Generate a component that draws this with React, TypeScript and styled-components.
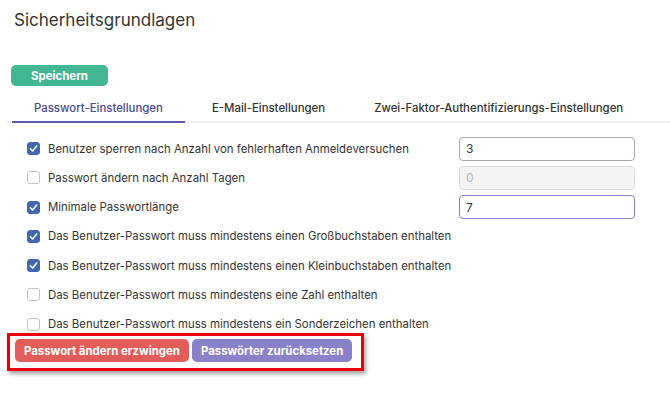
import React from "react";
import styled, { createGlobalStyle } from "styled-components";

const Global = createGlobalStyle`
  html, body { margin: 0; padding: 0; background: #fff; }
  body { font-family: Inter, "Noto Sans", Arial, sans-serif; color: #333; }
  * { box-sizing: border-box; }
`;

const Page = styled.div`
  width: 670px;
  height: 393px;
  padding: 8px 0 0 0;
  overflow: hidden;
`;

const Title = styled.h1`
  margin: 0 0 0 14px;
  font-size: 17px;
  font-weight: 400;
  line-height: 24px;
  color: #333;
`;

const SaveButton = styled.button`
  margin: 33px 0 0 11px;
  height: 21px;
  width: 97px;
  border: none;
  border-radius: 5px;
  background: #42b593;
  color: #fff;
  font-family: inherit;
  font-size: 11.4px;
  font-weight: 700;
  padding: 0;
`;

const Tabs = styled.div`
  display: flex;
  gap: 5px;
  margin: 8px 0 0 7px;
  padding-left: 5px;
  border-bottom: 2px solid #f0f0f3;
`;

const Tab = styled.div<{ $active?: boolean }>`
  padding: 0 22px;
  height: 29px;
  display: flex;
  align-items: center;
  white-space: nowrap;
  font-size: 11.4px;
  font-weight: 500;
  color: ${(p) => (p.$active ? "#4a4a92" : "#333")};
  border-bottom: 2px solid ${(p) => (p.$active ? "#5b58a8" : "transparent")};
  margin-bottom: -2px;
`;

const Rows = styled.div`
  margin: 11px 0 0 27px;
  display: flex;
  flex-direction: column;
  width: 608px;
`;

const Row = styled.label`
  height: 29.25px;
  display: flex;
  align-items: center;
  font-size: 11.4px;
  color: #333;
  white-space: nowrap;
`;

const Box = styled.span<{ $checked?: boolean }>`
  width: 13px;
  height: 13px;
  flex: none;
  border-radius: 3px;
  border: 1px solid ${(p) => (p.$checked ? "#4168ad" : "#c4c4c4")};
  background: ${(p) => (p.$checked ? "#4168ad" : "#fff")};
  display: flex;
  align-items: center;
  justify-content: center;
  margin-right: 8px;
`;

const Label = styled.span`
  flex: 1;
`;

const Input = styled.div<{ $variant: "normal" | "disabled" | "focus" }>`
  width: 176px;
  height: 24px;
  border-radius: 4px;
  display: flex;
  align-items: center;
  padding-left: 6px;
  font-size: 12px;
  border: 1px solid
    ${(p) =>
      p.$variant === "focus" ? "#8581c6" : p.$variant === "disabled" ? "#dcdcdf" : "#a9a9ab"};
  background: ${(p) => (p.$variant === "disabled" ? "#f3f4f6" : "#fff")};
  color: ${(p) => (p.$variant === "disabled" ? "#b5b5b8" : "#333")};
`;

const Highlight = styled.div`
  display: inline-flex;
  gap: 3px;
  margin: -6px 0 0 7px;
  padding: 3px 9px 6px 5px;
  border: 3px solid #e8000b;
  box-shadow: 2px 3px 4px rgba(0, 0, 0, 0.35);
`;

const ActionButton = styled.button<{ $color: string }>`
  height: 23px;
  border: none;
  border-radius: 5px;
  padding: 0 9px;
  background: ${(p) => p.$color};
  color: #fff;
  font-family: inherit;
  font-size: 11.4px;
  font-weight: 700;
`;

const Check = () => (
  <svg width="9" height="9" viewBox="0 0 10 10">
    <path d="M1.5 5.3 L4 7.8 L8.6 2.2" fill="none" stroke="#fff" strokeWidth="1.7" strokeLinecap="round" strokeLinejoin="round" />
  </svg>
);

const rows: { text: string; checked: boolean; input?: { value: string; variant: "normal" | "disabled" | "focus" } }[] = [
  { text: "Benutzer sperren nach Anzahl von fehlerhaften Anmeldeversuchen", checked: true, input: { value: "3", variant: "normal" } },
  { text: "Passwort ändern nach Anzahl Tagen", checked: false, input: { value: "0", variant: "disabled" } },
  { text: "Minimale Passwortlänge", checked: true, input: { value: "7", variant: "focus" } },
  { text: "Das Benutzer-Passwort muss mindestens einen Großbuchstaben enthalten", checked: true },
  { text: "Das Benutzer-Passwort muss mindestens einen Kleinbuchstaben enthalten", checked: true },
  { text: "Das Benutzer-Passwort muss mindestens eine Zahl enthalten", checked: false },
  { text: "Das Benutzer-Passwort muss mindestens ein Sonderzeichen enthalten", checked: false },
];

export default function App() {
  return (
    <Page>
      <Global />
      <Title>Sicherheitsgrundlagen</Title>
      <SaveButton>Speichern</SaveButton>
      <Tabs>
        <Tab $active>Passwort-Einstellungen</Tab>
        <Tab>E-Mail-Einstellungen</Tab>
        <Tab>Zwei-Faktor-Authentifizierungs-Einstellungen</Tab>
      </Tabs>
      <Rows>
        {rows.map((r) => (
          <Row key={r.text}>
            <Box $checked={r.checked}>{r.checked && <Check />}</Box>
            <Label>{r.text}</Label>
            {r.input && <Input $variant={r.input.variant}>{r.input.value}</Input>}
          </Row>
        ))}
      </Rows>
      <Highlight>
        <ActionButton $color="#e25d5a">Passwort ändern erzwingen</ActionButton>
        <ActionButton $color="#8a82c8">Passwörter zurücksetzen</ActionButton>
      </Highlight>
    </Page>
  );
}
